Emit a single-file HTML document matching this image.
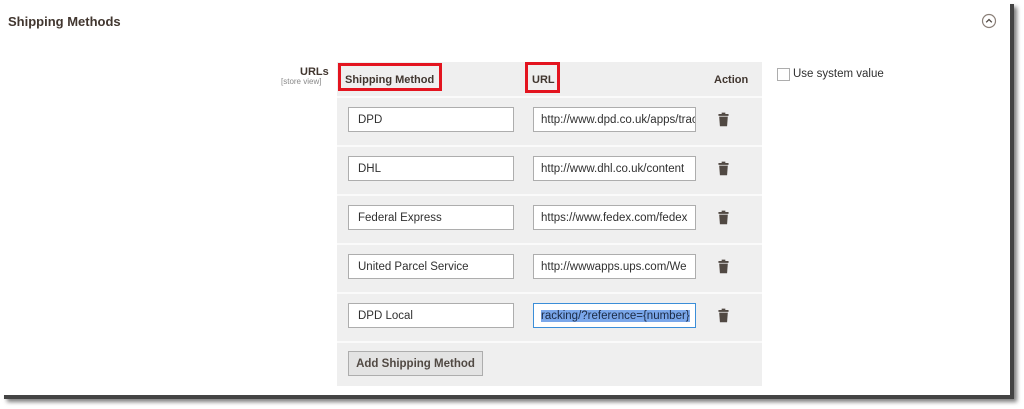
<!DOCTYPE html>
<html><head><style>
body{margin:0;width:1024px;height:409px;background:#fff;position:relative;overflow:hidden;font-family:"Liberation Sans",sans-serif;}
.page{position:absolute;left:0;top:0;width:1010px;height:395px;background:#fff;box-shadow:4px 4px 0 #444,7px 7px 4px rgba(0,0,0,.5);}
.t{position:absolute;color:#41362f;}
.grid{position:absolute;left:337px;top:62px;width:425px;height:324px;background:#efefef;}
.sep{position:absolute;left:0;width:425px;height:2px;background:#fafafa;}
.in{position:absolute;border:1px solid #adadad;background:#fff;font-size:11.5px;color:#303030;line-height:25px;padding-left:9px;box-sizing:border-box;height:25px;overflow:hidden;white-space:nowrap;}
.red{position:absolute;border:3px solid #e3141f;}
.trash{position:absolute;width:11px;height:15px;}
</style></head><body>
<div class="page">
<div class="t" style="left:8px;top:14px;font-size:13px;font-weight:bold;">Shipping Methods</div>
<svg style="position:absolute;left:981px;top:13px" width="16" height="16"><circle cx="8" cy="8" r="6.5" fill="none" stroke="#8a7f78" stroke-width="1.2"/><path d="M5.2 9.3 L8 6.5 L10.8 9.3" fill="none" stroke="#514943" stroke-width="1.3"/></svg>
<div class="t" style="left:300px;top:66px;font-size:11px;font-weight:bold;">URLs</div>
<div class="t" style="left:281px;top:77px;font-size:8px;color:#888;">[store view]</div>
<div class="grid">
 <div class="t" style="left:8px;top:12px;font-size:11px;font-weight:bold;">Shipping Method</div>
 <div class="t" style="left:195px;top:12px;font-size:11px;font-weight:bold;">URL</div>
 <div class="t" style="left:377px;top:12px;font-size:11px;font-weight:bold;">Action</div>
 <div class="sep" style="top:34px"></div>
 <div class="sep" style="top:83px"></div>
 <div class="sep" style="top:132px"></div>
 <div class="sep" style="top:181px"></div>
 <div class="sep" style="top:230px"></div>
 <div class="sep" style="top:279px"></div>
 <div class="in" style="left:11px;top:45px;width:166px">DPD</div>
 <div class="in" style="left:196px;top:45px;width:163px;padding-left:7px">http://www.dpd.co.uk/apps/tracking</div>
 <div class="in" style="left:11px;top:94px;width:166px">DHL</div>
 <div class="in" style="left:196px;top:94px;width:163px;padding-left:7px">http://www.dhl.co.uk/content</div>
 <div class="in" style="left:11px;top:143px;width:166px">Federal Express</div>
 <div class="in" style="left:196px;top:143px;width:163px;padding-left:7px">https://www.fedex.com/fedex</div>
 <div class="in" style="left:11px;top:192px;width:166px">United Parcel Service</div>
 <div class="in" style="left:196px;top:192px;width:163px;padding-left:7px">http://wwwapps.ups.com/We</div>
 <div class="in" style="left:11px;top:241px;width:166px">DPD Local</div>
 <div class="in" style="left:196px;top:241px;width:163px;border-color:#3b8ed8;padding-left:7px"><span style="background:#7aa7ea;color:#1b2a44">racking/?reference={number}</span></div>
 <div style="position:absolute;left:11px;top:289px;width:135px;height:25px;background:#e3e3e3;border:1px solid #adadad;box-sizing:border-box;font-size:11.5px;font-weight:bold;color:#514943;text-align:center;line-height:24px;">Add Shipping Method</div>
</div>
<svg class="trash" style="left:718px;top:112px" width="12" height="16" viewBox="0 0 12 16"><path d="M4 0.5h4v1.5h3.5v2H0.5V2H4z" fill="#514943"/><path d="M1.3 4.8h9.4l-0.8 10.5H2.1z" fill="#514943"/></svg>
<svg class="trash" style="left:718px;top:161px" width="12" height="16" viewBox="0 0 12 16"><path d="M4 0.5h4v1.5h3.5v2H0.5V2H4z" fill="#514943"/><path d="M1.3 4.8h9.4l-0.8 10.5H2.1z" fill="#514943"/></svg>
<svg class="trash" style="left:718px;top:210px" width="12" height="16" viewBox="0 0 12 16"><path d="M4 0.5h4v1.5h3.5v2H0.5V2H4z" fill="#514943"/><path d="M1.3 4.8h9.4l-0.8 10.5H2.1z" fill="#514943"/></svg>
<svg class="trash" style="left:718px;top:259px" width="12" height="16" viewBox="0 0 12 16"><path d="M4 0.5h4v1.5h3.5v2H0.5V2H4z" fill="#514943"/><path d="M1.3 4.8h9.4l-0.8 10.5H2.1z" fill="#514943"/></svg>
<svg class="trash" style="left:718px;top:308px" width="12" height="16" viewBox="0 0 12 16"><path d="M4 0.5h4v1.5h3.5v2H0.5V2H4z" fill="#514943"/><path d="M1.3 4.8h9.4l-0.8 10.5H2.1z" fill="#514943"/></svg>
<div class="red" style="left:338px;top:63px;width:98px;height:22px"></div>
<div class="red" style="left:525px;top:62px;width:29px;height:25px"></div>
<div style="position:absolute;left:777px;top:68px;width:11px;height:11px;border:1px solid #adadad;background:#fff"></div>
<div class="t" style="left:793px;top:68px;font-size:11.5px;color:#303030">Use system value</div>
</div>
</body></html>
